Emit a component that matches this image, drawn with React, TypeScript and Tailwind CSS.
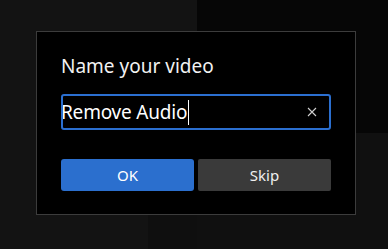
import React from 'react';

export default function App() {
  return (
    <div className="relative h-[249px] w-[388px] overflow-hidden bg-[#131313] font-['Noto_Sans',sans-serif]">
      {/* background panels */}
      <div className="flex h-full">
        <div className="w-[148px] bg-[#131313]" />
        <div className="flex w-[49px] flex-col">
          <div className="h-[214px] bg-[#131313]" />
          <div className="flex-1 bg-[#0f0f0f]" />
        </div>
        <div className="flex flex-1 flex-col">
          <div className="h-[133px] bg-[#060606]" />
          <div className="flex-1 bg-[#101010]" />
        </div>
      </div>

      {/* dialog */}
      <div className="absolute left-[36px] top-[31px] flex h-[184px] w-[320px] flex-col border border-[#3c3c3c] bg-black px-[24px] pt-[20px]">
        <div className="text-[19px] leading-[28px] text-[#f2f2f2]">Name your video</div>

        <div className="mt-[14px] flex h-[36px] w-[270px] items-center overflow-hidden rounded-[3px] border-2 border-[#2b6fd0] bg-black pr-[12px]">
          <span className="-ml-[2px] text-[19px] leading-[26px] tracking-[-0.2px] text-white">Remove Audio</span>
          <span className="ml-[1px] h-[25px] w-px bg-white" />
          <div className="flex-1" />
          <svg width="10" height="10" viewBox="0 0 10 10" className="text-[#cfcfcf]">
            <path d="M1 1 L9 9 M9 1 L1 9" stroke="currentColor" strokeWidth="1.1" />
          </svg>
        </div>

        <div className="mt-[29px] flex gap-[4px]">
          <button className="flex h-[32px] w-[133px] items-center justify-center rounded-[3px] bg-[#2b6fce] text-[15px] text-white">
            OK
          </button>
          <button className="flex h-[32px] w-[133px] items-center justify-center rounded-[2px] bg-[#3a3a3a] text-[15px] text-[#f0f0f0]">
            Skip
          </button>
        </div>
      </div>
    </div>
  );
}
